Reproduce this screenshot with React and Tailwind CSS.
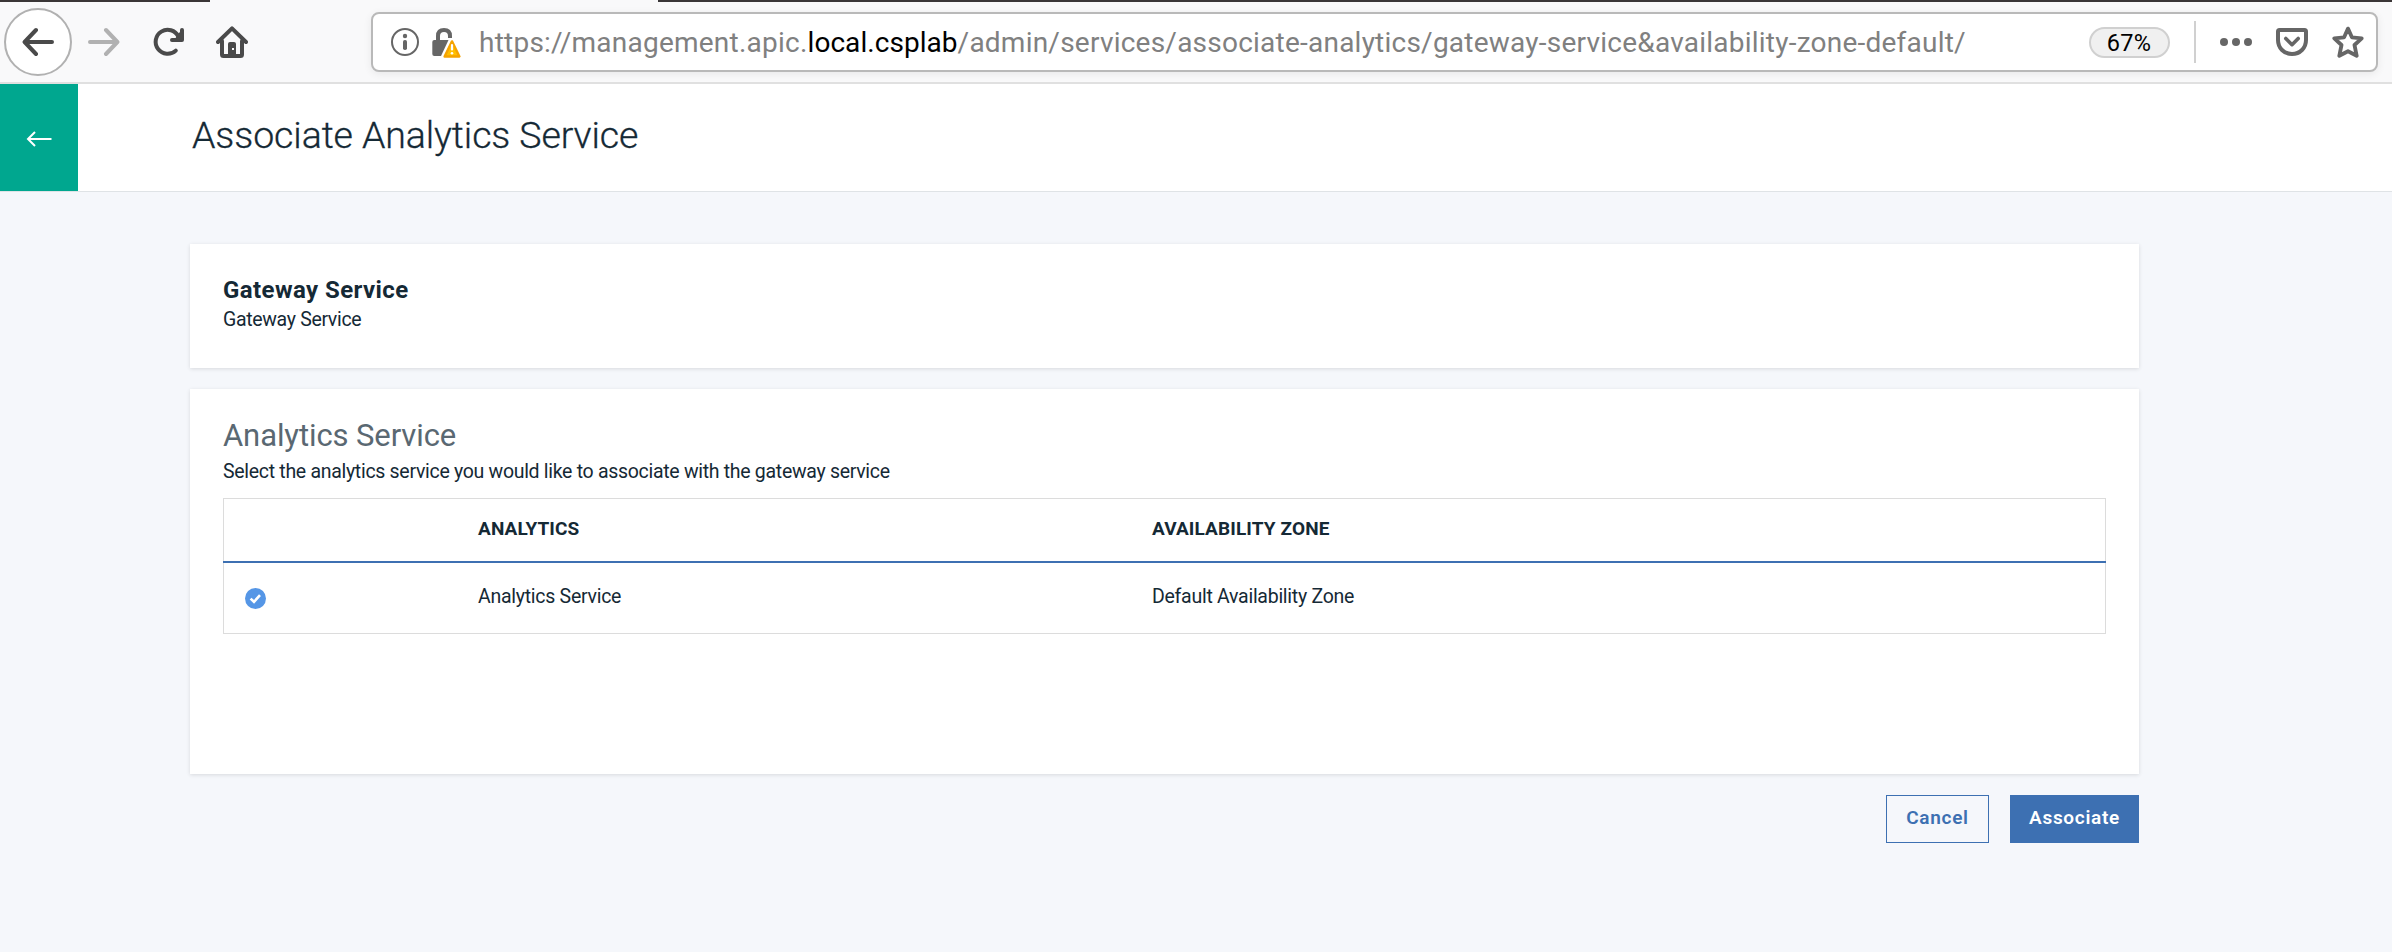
function BackIcon() {
  return (
    <svg className="size-8" viewBox="0 0 32 32" fill="none" stroke="#4a4a4a" strokeWidth="4" strokeLinecap="round" strokeLinejoin="round">
      <path d="M30 16H3M14 4L2.6 16L14 28" />
    </svg>
  );
}

function ForwardIcon() {
  return (
    <svg className="size-8" viewBox="0 0 32 32" fill="none" stroke="#b1b1b1" strokeWidth="4" strokeLinecap="round" strokeLinejoin="round">
      <path d="M2 16H29M18 4L29.4 16L18 28" />
    </svg>
  );
}

function ReloadIcon() {
  return (
    <svg className="size-8" viewBox="0 0 32 32" fill="none" stroke="#4a4a4a" strokeWidth="4" strokeLinecap="round" strokeLinejoin="round">
      <path d="M23.8 24.6A12 12 0 1 1 26.4 10.5" />
      <path d="M30 4V14H20" />
      <path d="M29 6V13H24Z" fill="#4a4a4a" strokeWidth="2" />
    </svg>
  );
}

function HomeIcon() {
  return (
    <svg className="size-8" viewBox="0 0 32 32" fill="none" stroke="#4a4a4a" strokeWidth="4" strokeLinecap="round" strokeLinejoin="round">
      <path d="M2 16L16 2.4L30 16" />
      <path d="M6 15V28.5Q6 30 7.5 30H24.500Q26 30 26 28.500V15" />
      <path d="M12 30V18Q12 16 14 16H18Q20 16 20 18V30Z" fill="#4a4a4a" stroke="none" />
      <rect x="16" y="22" width="2" height="2" fill="#f9f9fa" stroke="none" />
    </svg>
  );
}

function InfoIcon() {
  return (
    <svg className="size-7" viewBox="0 0 28 28" fill="none">
      <circle cx="14" cy="14" r="13" stroke="#666" strokeWidth="2" />
      <circle cx="14" cy="8" r="2.2" fill="#666" />
      <rect x="12" y="12" width="4" height="10" rx="1.800" fill="#666" />
    </svg>
  );
}

function LockIcon() {
  return (
    <svg className="h-[30px] w-[30px]" viewBox="0 0 30 30" fill="none">
      <path d="M7 13V8Q7 2 13 2Q19 2 19 8V10" stroke="#666" strokeWidth="4" />
      <path d="M3.300 12H17.500L10 28H3.300Q1.300 28 1.300 26V14Q1.300 12 3.300 12Z" fill="#666" />
      <path d="M21 13L28.400 28.500H13.600Z" fill="#ffbf00" stroke="#fff" strokeWidth="5" strokeLinejoin="round" />
      <path d="M21 13.400L28.400 28.500H13.600Z" fill="#ffbf00" stroke="#f5a300" strokeWidth="2.400" strokeLinejoin="round" />
      <path d="M21 17V21.500" stroke="#fff" strokeWidth="2.200" strokeLinecap="round" />
      <circle cx="21" cy="25.300" r="1.300" fill="#fff" />
    </svg>
  );
}

function PocketIcon() {
  return (
    <svg className="size-8" viewBox="0 0 32 32" fill="none" stroke="#666" strokeWidth="4" strokeLinecap="round" strokeLinejoin="round">
      <path d="M3.500 4H28.500Q30 4 30 5.500V14C30 22 24 28 16 28S2 22 2 14V5.500Q2 4 3.500 4Z" />
      <path d="M9.800 12.500L16 18.700L22.200 12.500" strokeWidth="3.600" />
    </svg>
  );
}

function StarIcon() {
  return (
    <svg className="size-8" viewBox="0 0 32 32" fill="none" stroke="#666" strokeWidth="3.800" strokeLinejoin="round">
      <path d="M16 2.600L19.900 11.300L29.700 12.300L22.500 19L24.700 29.800L16 25.200L7.300 29.800L9.500 19L2.300 12.300L12.100 11.300Z" />
    </svg>
  );
}

function BrowserToolbar() {
  return (
    <div className="flex h-[84px] flex-col border-b-2 border-[#e0e0e0] bg-[#f9f9fa]">
      <div className="flex h-0.5 shrink-0">
        <div className="w-[210px] bg-[#3a3637]" />
        <div className="ml-[448px] flex-1 bg-[#3a3637]" />
      </div>
      <div className="flex flex-1 items-center pr-[14px] pl-1">
        <div className="flex size-[68px] items-center justify-center rounded-full border-2 border-[#b1b1b1] bg-white">
          <BackIcon />
        </div>
        <div className="ml-4 flex gap-8">
          <ForwardIcon />
          <ReloadIcon />
          <HomeIcon />
        </div>
        <div className="ml-[123px] flex h-[60px] flex-1 items-center rounded-lg border-2 border-[#b9b9b9] bg-white pr-3 pl-[18px] shadow-[0_2px_8px_rgba(0,0,0,0.07)]">
          <InfoIcon />
          <div className="ml-3 pt-0.5">
            <LockIcon />
          </div>
          <div className="ml-[18px] flex-1 pt-0.5 text-[28px] leading-[34px] tracking-[0.23px] whitespace-nowrap text-[#808080]">
            https://management.apic.<span className="tracking-[0.05px] text-black">local.csplab</span>
            /admin/services/associate-analytics/gateway-service&amp;availability-zone-default/
          </div>
          <div className="mt-px flex h-[31px] w-[81px] items-center justify-center rounded-full border-2 border-[#d0d0d0] bg-[#f0f0f0] pt-0.5 pr-px text-[23.500px] tracking-[0.3px] text-black">
            67%
          </div>
          <div className="ml-6 h-[42px] w-0.5 bg-[#d0d0d0]" />
          <div className="ml-6 flex gap-1">
            <div className="size-2 rounded-full bg-[#666]" />
            <div className="size-2 rounded-full bg-[#666]" />
            <div className="size-2 rounded-full bg-[#666]" />
          </div>
          <div className="ml-6 flex gap-6">
            <PocketIcon />
            <StarIcon />
          </div>
        </div>
      </div>
    </div>
  );
}

function PageHeader() {
  return (
    <header className="flex h-[108px] items-center border-b border-[#dfe3e6] bg-white">
      <button className="flex h-full w-[78px] items-center justify-center bg-[#00a78f]">
        <svg className="mt-0.5 h-4 w-[26px]" viewBox="0 0 26 16" fill="none" stroke="#fff" strokeWidth="2">
          <path d="M25.500 8H2M9 1L2 8L9 15" />
        </svg>
      </button>
      <h1 className="ml-[114px] pb-[6px] text-[37.500px] leading-[50px] font-light tracking-[-0.1px] text-[#152935] [-webkit-text-stroke:0.3px_#152935]">
        Associate Analytics Service
      </h1>
    </header>
  );
}

function AnalyticsTable() {
  return (
    <div className="mt-[11px] flex h-[136px] flex-col border border-[#dcdcdc] text-[19.500px] leading-[30px] tracking-[-0.27px] text-[#152935]">
      <div className="-mx-px flex h-16 items-center border-b-2 border-[#3d70b2] pb-0.5 pl-[255px] text-[19px] font-bold tracking-[0.12px]">
        <div className="w-[674px]">ANALYTICS</div>
        <div>AVAILABILITY ZONE</div>
      </div>
      <div className="flex flex-1 items-center pl-[21px]">
        <svg className="size-[21px]" viewBox="0 0 21 21" fill="none">
          <circle cx="10.500" cy="10.500" r="10.500" fill="#5596e6" />
          <path d="M5.600 10.600L9 13.800L15 7.200" stroke="#fff" strokeWidth="2.600" />
        </svg>
        <div className="ml-[212px] w-[674px] pb-0.5">Analytics Service</div>
        <div className="pb-0.5">Default Availability Zone</div>
      </div>
    </div>
  );
}

export default function App() {
  return (
    <div className="h-[952px] w-[2392px] overflow-hidden bg-[#f5f7fb] font-[Roboto,sans-serif]">
      <BrowserToolbar />
      <PageHeader />
      <main className="mt-[52px] ml-[190px] flex w-[1949px] flex-col gap-[21px]">
        <section className="h-[124px] bg-white px-[33px] pt-[31px] text-[#152935] shadow-[0_1px_4px_rgba(0,0,0,0.12)]">
          <h2 className="text-2xl leading-[30px] font-bold tracking-[0.42px]">Gateway Service</h2>
          <p className="text-[19.500px] leading-[30px] tracking-[-0.33px]">Gateway Service</p>
        </section>
        <section className="h-[385px] bg-white px-[33px] pt-[27px] shadow-[0_1px_4px_rgba(0,0,0,0.12)]">
          <h2 className="text-[31px] leading-[40px] tracking-[-0.1px] text-[#5a6872]">Analytics Service</h2>
          <p className="mt-px text-[19.500px] leading-[30px] tracking-[-0.3px] text-[#152935]">
            Select the analytics service you would like to associate with the gateway service
          </p>
          <AnalyticsTable />
        </section>
        <div className="flex justify-end gap-[21px] text-[19px] font-semibold tracking-[0.7px]">
          <button className="flex h-12 w-[103px] items-center justify-center border border-[#3d70b2] pb-0.5 text-[#3d70b2]">
            Cancel
          </button>
          <button className="flex h-12 w-[129px] items-center justify-center bg-[#3d70b2] pb-0.5 text-white">
            Associate
          </button>
        </div>
      </main>
    </div>
  );
}
